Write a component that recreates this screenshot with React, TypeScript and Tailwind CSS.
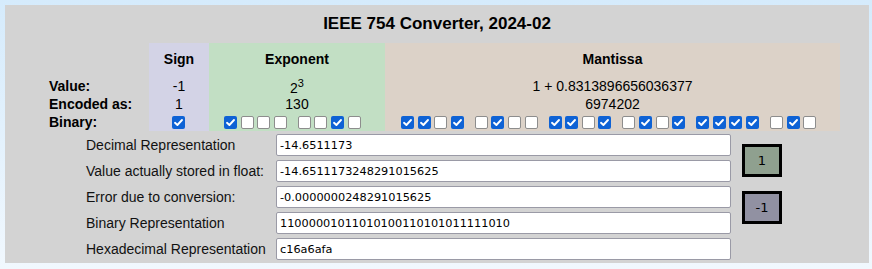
import React from 'react';

const BITS = '11000001011010100110101011111010';

const sign = BITS.slice(0, 1);
const exponent = BITS.slice(1, 9);
const mantissa = BITS.slice(9);

function chunk(s: string, n: number) {
    const out: string[] = [];
    for (let i = 0; i < s.length; i += n) out.push(s.slice(i, i + n));
    return out;
}

function Check({ on }: { on: boolean }) {
    if (!on) {
        return <span className="block w-[13px] h-[13px] rounded-[2px] bg-white border border-[#8d8d8d]" />;
    }
    return (
        <span className="flex w-[13px] h-[13px] rounded-[2px] bg-[#0e62d5] items-center justify-center">
            <svg width="11" height="11" viewBox="0 0 11 11">
                <path d="M2 5.8 L4.4 8 L9 3" stroke="white" strokeWidth="1.9" fill="none" strokeLinecap="round" strokeLinejoin="round" />
            </svg>
        </span>
    );
}

function BitGroups({ bits }: { bits: string }) {
    return (
        <div className="flex gap-[11px]">
            {chunk(bits, 4).map((g, i) => (
                <div key={i} className="flex gap-[3.6px]">
                    {g.split('').map((b, j) => (
                        <Check key={j} on={b === '1'} />
                    ))}
                </div>
            ))}
        </div>
    );
}

const rows = [
    { label: 'Decimal Representation', value: '-14.6511173' },
    { label: 'Value actually stored in float:', value: '-14.6511173248291015625' },
    { label: 'Error due to conversion:', value: '-0.0000000248291015625' },
    { label: 'Binary Representation', value: BITS },
    { label: 'Hexadecimal Representation', value: 'c16a6afa' },
];

export default function App() {
    return (
        <div className="w-[872px] h-[269px] pt-[5px] pl-[5px] bg-gradient-to-b from-[#d5ebfc] to-[#f1f8fe] font-['Liberation_Sans',Arial,sans-serif] text-black">
            <div className="w-[864px] h-[258px] bg-[#d3d3d3]">
                <div className="h-[38px] pt-[9px] text-center text-[17px] leading-[20px] font-bold">
                    IEEE 754 Converter, 2024-02
                </div>

                <div className="grid grid-cols-[144px_60px_176px_455px] grid-rows-[34px_18px_18px_18px] text-[14px] leading-[18px]">
                    {/* header */}
                    <div />
                    <div className="bg-[#d3d3e6] pt-[7px] text-center font-bold">Sign</div>
                    <div className="bg-[#c2dfc4] pt-[7px] text-center font-bold">Exponent</div>
                    <div className="bg-[#dcd2c8] pt-[7px] text-center font-bold">Mantissa</div>

                    {/* value */}
                    <div className="pl-[44px] font-bold">Value:</div>
                    <div className="bg-[#d3d3e6] text-center">-1</div>
                    <div className="bg-[#c2dfc4] text-center pt-[2px]">
                        2<sup className="text-[11px] -top-[6px]">3</sup>
                    </div>
                    <div className="bg-[#dcd2c8] text-center">1 + 0.8313896656036377</div>

                    {/* encoded */}
                    <div className="pl-[44px] font-bold">Encoded as:</div>
                    <div className="bg-[#d3d3e6] text-center">1</div>
                    <div className="bg-[#c2dfc4] text-center">130</div>
                    <div className="bg-[#dcd2c8] text-center">6974202</div>

                    {/* binary */}
                    <div className="pl-[44px] font-bold">Binary:</div>
                    <div className="bg-[#d3d3e6] flex items-center justify-center pr-px">
                        <Check on={sign === '1'} />
                    </div>
                    <div className="bg-[#c2dfc4] flex items-center pl-[15px]">
                        <BitGroups bits={exponent} />
                    </div>
                    <div className="bg-[#dcd2c8] flex items-center pl-[16px]">
                        <BitGroups bits={mantissa} />
                    </div>
                </div>

                <div className="flex mt-[3px] pl-[81px]">
                    <div className="grid grid-cols-[190px_455px] gap-y-[4px] text-[14px]">
                        {rows.map(r => (
                            <React.Fragment key={r.label}>
                                <div className="h-[22px] flex items-center text-[#111]">{r.label}</div>
                                <input
                                    readOnly
                                    value={r.value}
                                    className="h-[22px] w-[455px] bg-white border border-[#9a9aa6] rounded-[2px] pl-[3px] font-['DejaVu_Sans',Verdana,sans-serif] text-[11.3px] text-black outline-none"
                                />
                            </React.Fragment>
                        ))}
                    </div>
                    <div className="ml-[11px] pt-[10px] flex flex-col gap-[14px] font-['DejaVu_Sans',Verdana,sans-serif] text-[13px]">
                        <div className="w-[40px] h-[33px] border-[3px] border-black bg-[#8fa08f] flex items-center justify-center">1</div>
                        <div className="w-[40px] h-[33px] border-[3px] border-black bg-[#9191a2] flex items-center justify-center">-1</div>
                    </div>
                </div>
            </div>
        </div>
    );
}
